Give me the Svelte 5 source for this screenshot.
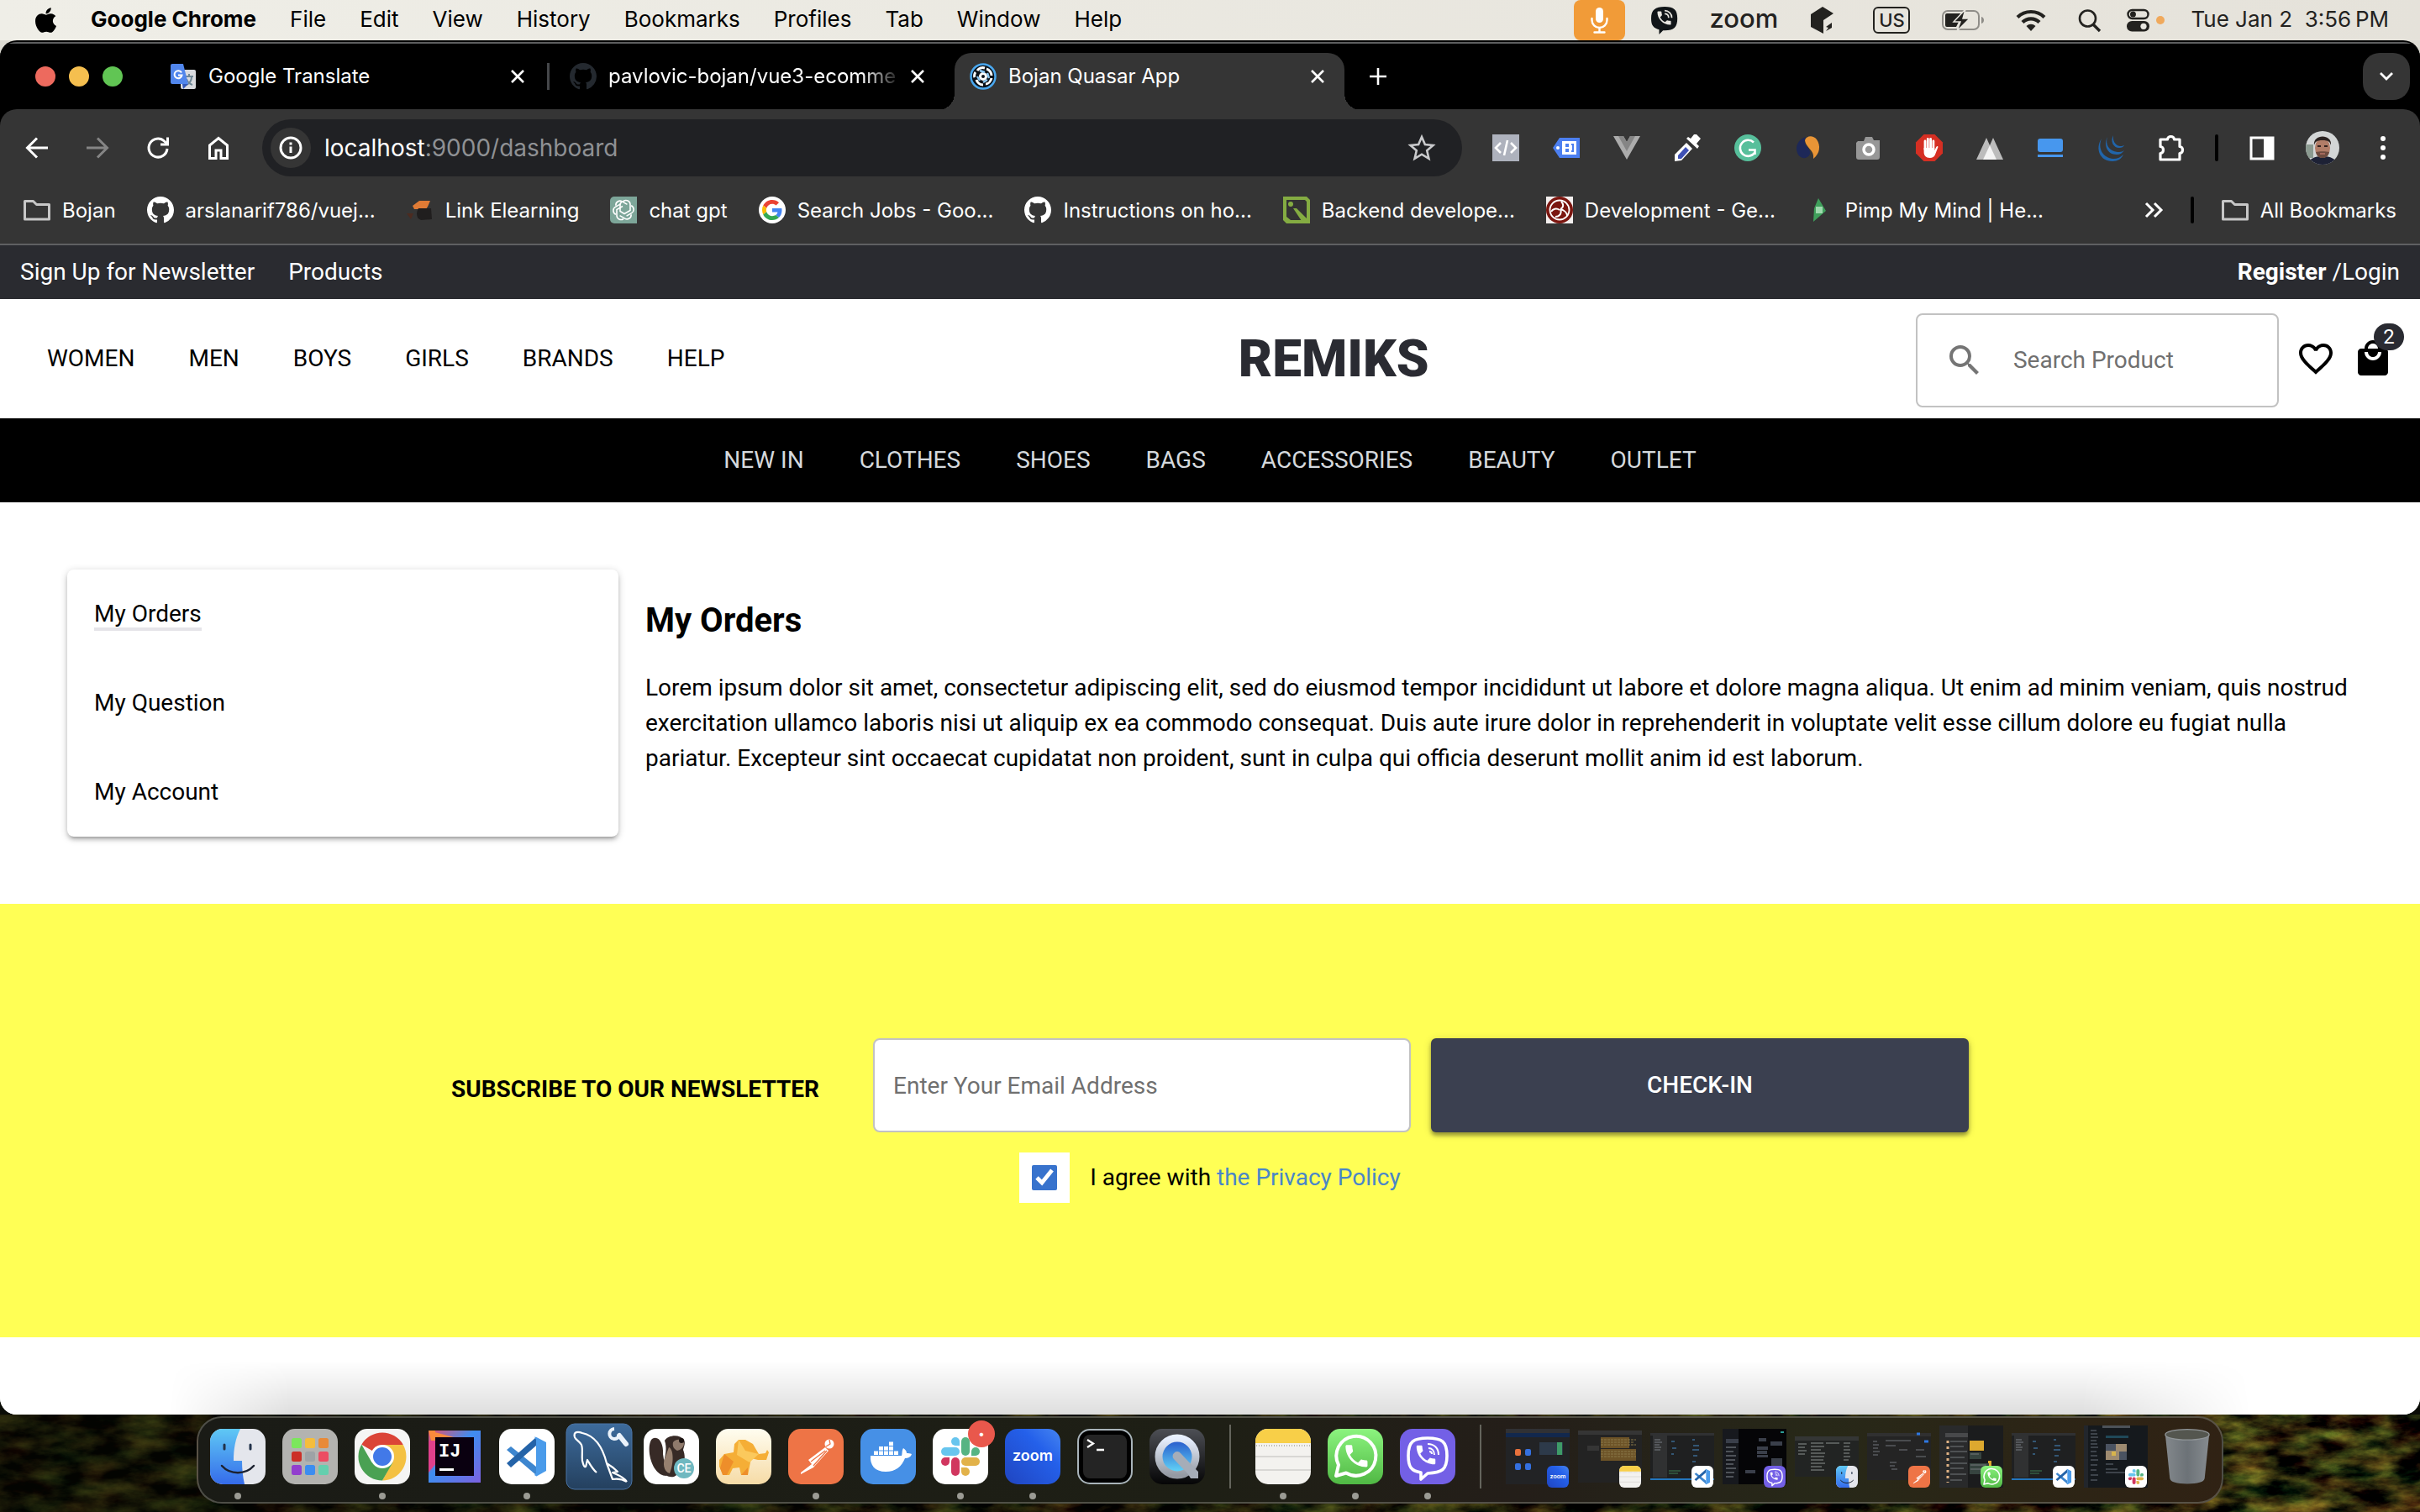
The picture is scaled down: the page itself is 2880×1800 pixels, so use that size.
<script>
  const menus = ['File', 'Edit', 'View', 'History', 'Bookmarks', 'Profiles', 'Tab', 'Window', 'Help'];
  const tabs = [
    { title: 'Google Translate', icon: 'translate' },
    { title: 'pavlovic-bojan/vue3-ecomme', icon: 'githubDark' },
    { title: 'Bojan Quasar App', icon: 'quasar', active: true }
  ];
  const extensions = ['code', 'tag', 'vue', 'pipette', 'grammarly', 'swirl', 'camera', 'adblock', 'peaks', 'laptop', 'jquery', 'puzzle'];
  const bookmarks = [
    { title: 'Bojan', icon: 'folder' },
    { title: 'arslanarif786/vuej...', icon: 'github' },
    { title: 'Link Elearning', icon: 'link' },
    { title: 'chat gpt', icon: 'gpt' },
    { title: 'Search Jobs - Goo...', icon: 'google' },
    { title: 'Instructions on ho...', icon: 'github' },
    { title: 'Backend develope...', icon: 'backend' },
    { title: 'Development - Ge...', icon: 'gecko' },
    { title: 'Pimp My Mind | He...', icon: 'gem' }
  ];
  const primary = ['WOMEN', 'MEN', 'BOYS', 'GIRLS', 'BRANDS', 'HELP'];
  const secondary = ['NEW IN', 'CLOTHES', 'SHOES', 'BAGS', 'ACCESSORIES', 'BEAUTY', 'OUTLET'];
  const account = ['My Orders', 'My Question', 'My Account'];
  const apps = [
    { name: 'finder', open: true }, { name: 'launchpad' }, { name: 'chrome', open: true },
    { name: 'idea' }, { name: 'vscode', open: true }, { name: 'mysql' }, { name: 'dbeaver' },
    { name: 'sequel' }, { name: 'postman', open: true }, { name: 'docker' },
    { name: 'slack', open: true, badge: true }, { name: 'zoom', open: true }, { name: 'terminal' }, { name: 'quicktime' }
  ];
  const recents = [{ name: 'notes', open: true }, { name: 'whatsapp', open: true }, { name: 'viber', open: true }];
  const minimized = [
    { app: 'zoom', view: 'meeting' }, { app: 'notes', view: 'notes' }, { app: 'vscode', view: 'editor' },
    { app: 'viber', view: 'chat' }, { app: 'finder', view: 'files' }, { app: 'postman', view: 'api' },
    { app: 'whatsapp', view: 'messages' }, { app: 'vscode', view: 'editor' }, { app: 'slack', view: 'team' }
  ];
  let agreed = $state(true);
  let search = $state('');
  let email = $state('');
</script>

{#snippet icon(name)}
  {#if name === 'translate'}
    <svg viewBox="0 0 32 32"><rect x="13" y="8" width="18" height="23" rx="2" fill="#d9dbdf"/><path d="M18 16h10M23 13v3M20 26c4-2 6-6 6-10M20 19c1 3 4 6 7 7" stroke="#6f8796" stroke-width="2" fill="none"/><path d="M3 1h13l6 24H3a2 2 0 0 1-2-2V3a2 2 0 0 1 2-2z" fill="#5186ec"/><path d="M16 31l-1-6h7z" fill="#3358b8"/><path d="M14 11.500a4.500 4.500 0 1 0 .5 3H10" stroke="#fff" stroke-width="2" fill="none"/></svg>
  {:else if name === 'github' || name === 'githubDark'}
    <svg viewBox="0 0 16 16" fill={name === 'github' ? '#fff' : '#24292f'}><path d="M8 0C3.58 0 0 3.58 0 8c0 3.54 2.29 6.53 5.47 7.59.4.07.55-.17.55-.38 0-.19-.01-.82-.01-1.49-2.01.37-2.53-.49-2.69-.94-.09-.23-.48-.94-.82-1.13-.28-.15-.68-.52-.01-.53.63-.01 1.08.58 1.23.82.72 1.21 1.87.87 2.33.66.07-.52.28-.87.51-1.07-1.78-.2-3.64-.89-3.64-3.95 0-.87.31-1.59.82-2.15-.08-.2-.36-1.02.08-2.12 0 0 .67-.21 2.2.82.64-.18 1.32-.27 2-.27.68 0 1.36.09 2 .27 1.53-1.04 2.2-.82 2.2-.82.44 1.1.16 1.92.08 2.12.51.56.82 1.27.82 2.15 0 3.07-1.87 3.75-3.65 3.95.29.25.54.73.54 1.48 0 1.07-.01 1.93-.01 2.2 0 .21.15.46.55.38A8.013 8.013 0 0016 8c0-4.42-3.58-8-8-8z"/></svg>
  {:else if name === 'quasar'}
    <svg viewBox="0 0 32 32"><circle cx="16" cy="16" r="14.500" fill="#0b1118" stroke="#4aa7ee" stroke-width="2.500"/><g fill="none" stroke="#fff" stroke-width="3"><circle cx="16" cy="16" r="3.500"/><path d="M9 9c2-3 6-4 9-3M20 7c4 1 6 5 6 8M26 18c-1 4-4 7-7 7M16 26c-4 0-7-3-8-6M6 17c-1-2 0-5 1-6"/></g><path d="M12 9l6 2M21 12l2 6M21 20l-5 3M12 21l-3-5" stroke="#8cc9f5" stroke-width="2.400"/></svg>
  {:else if name === 'close'}
    <svg viewBox="0 0 16 16" fill="none" stroke="#fff" stroke-width="2.600"><path d="M1 1l14 14M15 1L1 15"/></svg>
  {:else if name === 'plus'}
    <svg viewBox="0 0 20 20" fill="none" stroke="#fff" stroke-width="2.600"><path d="M10 0v20M0 10h20"/></svg>
  {:else if name === 'chevron'}
    <svg viewBox="0 0 20 20" fill="none" stroke="#fff" stroke-width="2.800"><path d="M3 6l7 7 7-7"/></svg>
  {:else if name === 'back'}
    <svg viewBox="0 0 32 32" fill="none" stroke="#fff" stroke-width="3"><path d="M29 16H5M16 4.500L4.500 16 16 27.500"/></svg>
  {:else if name === 'forward'}
    <svg viewBox="0 0 32 32" fill="none" stroke="#858585" stroke-width="3"><path d="M3 16h24M16 4.500L27.500 16 16 27.500"/></svg>
  {:else if name === 'reload'}
    <svg viewBox="0 0 32 32" fill="none" stroke="#fff" stroke-width="3"><path d="M27 17a11 11 0 1 1-3.500-9L27 11.500"/><path d="M27.500 3.500V12H19"/></svg>
  {:else if name === 'home'}
    <svg viewBox="0 0 32 32" fill="none" stroke="#fff" stroke-width="3"><path d="M5.500 28.500V13L16 4.500 26.500 13v15.500h-7.500V19h-6v9.500z"/></svg>
  {:else if name === 'info'}
    <svg viewBox="0 0 32 32" fill="none" stroke="#fff"><circle cx="16" cy="16" r="12" stroke-width="3"/><path d="M16 14.500V22M16 9.500v3" stroke-width="3"/></svg>
  {:else if name === 'star'}
    <svg viewBox="0 0 32 32" fill="none" stroke="#c9cacc" stroke-width="2.600"><path d="M16 3l3.900 9 9.600.9-7.300 6.400 2.200 9.500L16 23.700l-8.400 5.100 2.200-9.500L2.500 12.900l9.600-.9z"/></svg>
  {:else if name === 'code'}
    <svg viewBox="0 0 32 32"><path fill="#aeb2bd" d="M0 0h32v32H0z"/><path d="M10 10l-6 6 6 6M22 10l6 6-6 6M18 7l-4 18" stroke="#fff" stroke-width="2.600" fill="none"/></svg>
  {:else if name === 'tag'}
    <svg viewBox="0 0 32 32"><path d="M0 16L8 4h24v24H8z" fill="#4c7ff0"/><circle cx="6" cy="16" r="2" fill="#fff"/><path d="M11 8h17v16H11z" fill="#fff"/><path d="M15 11h4v4h-4zM15 17h4v4h-4zM22 11h3v10h-3v-2h1v-6h-1z" fill="#4c7ff0"/></svg>
  {:else if name === 'vue'}
    <svg viewBox="0 0 32 32"><path d="M0 2h12l4 7 4-7h12L16 30z" fill="#acacac"/><path d="M6 2h6l4 7 4-7h6L16 20z" fill="#858585"/></svg>
  {:else if name === 'pipette'}
    <svg viewBox="0 0 32 32"><path d="M15 10l7 7L9 31l-8 1 0-8z" fill="#fff"/><path d="M14 15l4 4-9 10H5v-4z" fill="#3e50b5"/><path d="M15 5l13 12 2-3-3-3 5-6-5-5h-3l-4 5-3-2z" fill="#fff"/></svg>
  {:else if name === 'grammarly'}
    <svg viewBox="0 0 32 32"><circle cx="16" cy="16" r="16" fill="#57bf9b"/><path d="M23 9.500A9.500 9.500 0 1 0 24 22M17 18.500h7.500V24" fill="none" stroke="#fff" stroke-width="2.600"/></svg>
  {:else if name === 'swirl'}
    <svg viewBox="0 0 32 32"><path d="M13 3C4 6 0 14 3 22c3 8 13 8 15 1 1-6-5-8-6-13-.5-3 0-5 1-7z" fill="#1d2858"/><path d="M12 7c2-6 10-6 14-1 5 7 4 17-4 23 2-10-9-13-10-22z" fill="#e99536"/></svg>
  {:else if name === 'camera'}
    <svg viewBox="0 0 32 32"><path d="M3 8h7l2-5h8l2 4h7v20a3 3 0 0 1-3 3H4a3 3 0 0 1-3-3V10z" fill="#979797"/><circle cx="16" cy="18" r="6" fill="#999" stroke="#fff" stroke-width="3.500"/></svg>
  {:else if name === 'adblock'}
    <svg viewBox="0 0 32 32"><path d="M9.500 0h13L32 9.500v13L22.500 32h-13L0 22.500v-13z" fill="#d52f23"/><path d="M11 18V8M14.300 16V5.500M17.600 16V5.500M20.900 17V8" stroke="#fff" stroke-width="2.800" stroke-linecap="round"/><path d="M9.600 16h12.700v3l2-4c1-1.500 2.500-1 2 .5l-3.500 9c-1 2-3 3.500-6 3.500-5 0-7.200-3-7.200-7z" fill="#fff"/></svg>
  {:else if name === 'peaks'}
    <svg viewBox="0 0 32 32"><path d="M0 30L12 4l4 9 4-9 12 26z" fill="#bcbcbc"/><path d="M8 30l8-17 8 17z" fill="#f4f4f4"/></svg>
  {:else if name === 'laptop'}
    <svg viewBox="0 0 32 32" fill="#4797ee"><rect x="1" y="5" width="30" height="16" rx="3"/><path d="M1 24h30v3H1z"/></svg>
  {:else if name === 'jquery'}
    <svg viewBox="0 0 32 32" fill="#2165aa"><path d="M5 5c-8 12-2 27 13 27 6 0 11-3 13-8-3 3-7 5-12 5C7 28 0 17 5 5z"/><path d="M12 3c-5 10 0 21 11 21 4 0 7-2 9-5-3 2-5 2-8 2-10-1-15-9-12-18z"/><path d="M19 1c-4 7 0 15 7 15 3 0 5-1 6-3-2 1-4 1-5 1-6-1-9-7-8-13z"/></svg>
  {:else if name === 'puzzle'}
    <svg viewBox="0 0 32 32" fill="none" stroke="#fff" stroke-width="3.200" stroke-linejoin="round"><path d="M3 6h8.500a4 3.500 0 0 1 8 0H26v8.500a3.500 4 0 0 1 0 8V30H3v-7.500a3.500 4 0 0 0 0-8z"/></svg>
  {:else if name === 'panel'}
    <svg viewBox="0 0 32 32"><rect x="3" y="4" width="26" height="25" fill="none" stroke="#fff" stroke-width="3"/><path d="M18 3h12v27H18z" fill="#fff"/></svg>
  {:else if name === 'dots'}
    <svg viewBox="0 0 32 32" fill="#fff"><circle cx="16" cy="5" r="3"/><circle cx="16" cy="16" r="3"/><circle cx="16" cy="27" r="3"/></svg>
  {:else if name === 'avatar'}
    <svg viewBox="0 0 40 40"><g clip-path="url(#round40)"><path fill="#d3d6d6" d="M0 0h40v40H0z"/><path fill="#8b9a90" d="M0 16h9v16H0z"/><path d="M3 40c0-7 8-10 17-10s17 3 17 10z" fill="#1d2135"/><ellipse cx="20" cy="20" rx="9" ry="12" fill="#b27d68"/><path d="M10 17C8 3 32 3 30 17c-1-4-3-6-10-6s-9 2-10 6z" fill="#2b2220"/><path d="M12 25c4-1 12-1 16 0-1 5-4 7-8 7s-7-2-8-7z" fill="#6e4b3f"/><path d="M17 27h6" stroke="#a4685c" stroke-width="2"/><path d="M14 18h4M22 18h4" stroke="#33221e" stroke-width="2"/></g></svg>
  {:else if name === 'folder'}
    <svg viewBox="0 0 32 32" fill="none" stroke="#c7c7c7" stroke-width="3" stroke-linejoin="round"><path d="M1.500 5.500h10l4 4h15v17.500h-29z"/></svg>
  {:else if name === 'link'}
    <svg viewBox="0 0 32 32"><path d="M7 11l8-6h13l-3 7-2 3H9z" fill="#e07b35"/><path d="M14 14h15l1 13-13 1c-6-2-6-9-3-14z" fill="#201e1e"/><path d="M0 20h8l-3 7z" fill="#4c2b20"/></svg>
  {:else if name === 'gpt'}
    <svg viewBox="0 0 32 32"><path d="M5 0h27v32H5a5 5 0 0 1-5-5V5a5 5 0 0 1 5-5z" fill="#7da699"/><g fill="none" stroke="#fff" stroke-width="1.600"><path d="M16 5.500a5 5 0 0 1 8 4v7l-7 4-5-3V9a5 5 0 0 1 4-3.500z"/><path d="M16 5.500a5 5 0 0 1 8 4v7" transform="rotate(60 16 16)"/><path d="M16 5.500a5 5 0 0 1 8 4v7" transform="rotate(120 16 16)"/><path d="M16 5.500a5 5 0 0 1 8 4v7l-7 4" transform="rotate(180 16 16)"/><path d="M16 5.500a5 5 0 0 1 8 4v7" transform="rotate(240 16 16)"/><path d="M16 5.500a5 5 0 0 1 8 4v7" transform="rotate(300 16 16)"/></g></svg>
  {:else if name === 'google'}
    <svg viewBox="-8 -8 64 64"><circle cx="24" cy="24" r="32" fill="#fff"/><path fill="#EA4335" d="M24 9.500c3.540 0 6.710 1.220 9.210 3.600l6.850-6.850C35.900 2.380 30.470 0 24 0 14.620 0 6.510 5.380 2.560 13.220l7.980 6.190C12.430 13.720 17.740 9.500 24 9.500z"/><path fill="#4285F4" d="M46.980 24.550c0-1.570-.15-3.090-.38-4.550H24v9.020h12.940c-.58 2.960-2.260 5.480-4.780 7.180l7.730 6c4.510-4.180 7.090-10.360 7.090-17.650z"/><path fill="#FBBC05" d="M10.530 28.590c-.48-1.450-.76-2.990-.76-4.590s.27-3.140.76-4.590l-7.980-6.190C.92 16.460 0 20.120 0 24c0 3.880.92 7.540 2.560 10.780l7.970-6.190z"/><path fill="#34A853" d="M24 48c6.480 0 11.930-2.130 15.890-5.810l-7.730-6c-2.150 1.450-4.920 2.300-8.160 2.300-6.260 0-11.570-4.220-13.470-9.910l-7.980 6.190C6.510 42.620 14.620 48 24 48z"/></svg>
  {:else if name === 'backend'}
    <svg viewBox="0 0 32 32"><path d="M0 0h28l4 4v28H4l-4-4z" fill="#84ac42"/><path d="M4 4h22l2 2v22H9l-5-4z" fill="#333"/><circle cx="9" cy="9" r="3" fill="#84ac42"/><path d="M12 14h4l12 12v6h-4z" fill="#84ac42"/></svg>
  {:else if name === 'gecko'}
    <svg viewBox="0 0 32 32"><path fill="#f3efee" d="M0 0h32v32H0z"/><circle cx="16" cy="16" r="16" fill="#7b1610"/><circle cx="16" cy="16" r="11.500" fill="none" stroke="#fff" stroke-width="1.800"/><path d="M17 15c4-2 4-6 1-9M17 15c2 5-1 9-6 9M16 16c-4-3-8-1-10 2M17 15c4 1 8 4 8 8" fill="none" stroke="#fff" stroke-width="2"/></svg>
  {:else if name === 'gem'}
    <svg viewBox="0 0 32 32"><path d="M14 2l9 15-15 13 1-16z" fill="#3f9f5b"/><path d="M11 12h8v8h-8z" fill="#9fd9ae"/></svg>
  {:else if name === 'magnify'}
    <svg viewBox="0 0 24 24" fill="#757575"><path d="M15.500 14h-.79l-.28-.27A6.471 6.471 0 0 0 16 9.500 6.500 6.500 0 1 0 9.500 16c1.610 0 3.090-.59 4.230-1.570l.27.28v.79l5 4.990L20.490 19l-4.990-5zm-6 0C7.010 14 5 11.990 5 9.500S7.010 5 9.500 5 14 7.010 14 9.500 11.990 14 9.500 14z"/></svg>
  {:else if name === 'heart'}
    <svg viewBox="0 0 24 24"><path d="M16.500 3c-1.740 0-3.410.81-4.500 2.090C10.910 3.810 9.240 3 7.500 3 4.420 3 2 5.420 2 8.500c0 3.780 3.400 6.860 8.550 11.540L12 21.350l1.450-1.320C18.600 15.360 22 12.280 22 8.500 22 5.420 19.580 3 16.500 3zm-4.400 15.550l-.1.100-.1-.1C7.140 14.240 4 11.390 4 8.500 4 6.500 5.500 5 7.500 5c1.540 0 3.040.99 3.570 2.360h1.870C13.460 5.990 14.960 5 16.500 5c2 0 3.500 1.500 3.500 3.500 0 2.890-3.140 5.740-7.900 10.050z"/></svg>
  {:else if name === 'bag'}
    <svg viewBox="0 0 24 24"><path d="M19 6h-2c0-2.760-2.240-5-5-5S7 3.240 7 6H5c-1.100 0-1.990.9-1.990 2L3 20c0 1.100.9 2 2 2h14c1.100 0 2-.9 2-2V8c0-1.100-.9-2-2-2zm-7-3c1.660 0 3 1.340 3 3H9c0-1.660 1.340-3 3-3zm0 10c-2.760 0-5-2.240-5-5h2c0 1.660 1.340 3 3 3s3-1.340 3-3h2c0 2.760-2.240 5-5 5z"/></svg>
  {/if}
{/snippet}

{#snippet app(name)}
  {#if name === 'finder'}
    <svg viewBox="0 0 66 66"><rect width="66" height="66" rx="15" fill="#e4e6ec"/><path d="M15 0h21c-6 12-8 24-8 38h10c0 10 1 19 3 28H15A15 15 0 0 1 0 51V15A15 15 0 0 1 15 0z" fill="url(#finderBlue)"/><path d="M17 19v5M48 19v5" stroke="#22324a" stroke-width="3" stroke-linecap="round"/><path d="M14 44c10 11 28 11 38 0" fill="none" stroke="#1c2230" stroke-width="2.500" stroke-linecap="round"/></svg>
  {:else if name === 'launchpad'}
    <svg viewBox="0 0 66 66"><rect width="66" height="66" rx="15" fill="#b3b3b0"/><rect x="11" y="11" width="12" height="12" rx="2.500" fill="#7ce75c"/><rect x="27" y="11" width="12" height="12" rx="2.500" fill="#f5bd3c"/><rect x="43" y="11" width="12" height="12" rx="2.500" fill="#e88a38"/><rect x="11" y="27" width="12" height="12" rx="2.500" fill="#cc2f27"/><rect x="27" y="27" width="12" height="12" rx="2.500" fill="#9ea3a6"/><rect x="43" y="27" width="12" height="12" rx="2.500" fill="#ec4d62"/><rect x="11" y="43" width="12" height="12" rx="2.500" fill="#923fce"/><rect x="27" y="43" width="12" height="12" rx="2.500" fill="#3c8df0"/><rect x="43" y="43" width="12" height="12" rx="2.500" fill="#64cfae"/></svg>
  {:else if name === 'chrome'}
    <svg viewBox="0 0 66 66"><rect width="66" height="66" rx="15" fill="#f5f5f4"/><path d="M33 33L8.300 18.700A28.500 28.500 0 0 1 57.700 18.700z" fill="#db4437"/><path d="M33 19h24.800A28.500 28.500 0 0 1 33 61.500L45 40z" fill="#f4c142"/><path d="M8.300 18.700A28.500 28.500 0 0 0 33 61.500L45.500 40 20.500 40z" fill="#4aa153"/><circle cx="33" cy="33" r="14" fill="#fff"/><circle cx="33" cy="33" r="11" fill="#4279e8"/></svg>
  {:else if name === 'idea'}
    <svg viewBox="0 0 66 66"><path d="M2 2h62v62H2z" fill="url(#ideaEdge)"/><path d="M2 2l30 8-22 24zM2 2h8v14z" fill="#f98a3c"/><path d="M2 14l10 0v26L2 52z" fill="#e0408c"/><path d="M10 10h46v46H10z" fill="#0a0010"/><path d="M15 48.500h17" stroke="#fff" stroke-width="3"/><text x="14" y="33" font-family="Liberation Mono, monospace" font-weight="700" font-size="22" fill="#fff">IJ</text></svg>
  {:else if name === 'vscode'}
    <svg viewBox="0 0 66 66"><rect width="66" height="66" rx="15" fill="#fff"/><path d="M9 25l5-4 30 24v10z" fill="#3d86cf"/><path d="M9 41l5 5 30-26V10z" fill="#2463a8"/><path d="M42 9.500l2.500.5L56 16v34l-11.500 6.500L42 55l2-2.500V13z" fill="#4a9bea"/></svg>
  {:else if name === 'mysql'}
    <svg viewBox="0 0 80 80"><rect x="1" y="1" width="78" height="78" rx="10" fill="url(#mysqlBlue)" stroke="#4a74a6"/><path d="M11 17c-2-7 4-7 9-5 14 3 24 16 29 36 5 3 9 6 13 10l-6 1c6 3 13 5 17 11M11 17c1 3 5 4 8 9 2 6 0 11 1 19 1 4 2 8 4 7 1-2 1-5 2-8 3 5 6 11 11 15M49 48l7 19c6-1 12 0 17 3" fill="none" stroke="#fff" stroke-width="2.200" stroke-linejoin="round"/><path d="M64 15l8 10" stroke="#eaf2fb" stroke-width="6" stroke-linecap="round"/><path d="M58 7a6 6 0 1 0 6 8" stroke="#eaf2fb" stroke-width="4" fill="none"/></svg>
  {:else if name === 'dbeaver'}
    <svg viewBox="0 0 66 66"><rect width="66" height="66" rx="15" fill="#fff"/><path d="M10 12c8-5 14 6 13 18l4 26c-10 0-18-12-20-26-1-8 0-15 3-18z" fill="#372a26"/><path d="M25 14c4-7 18-8 23-1 2 4 0 8-1 12 5 12-1 27-11 32-12 2-15-8-12-18 2-8 4-16 1-25z" fill="#372a26"/><path d="M30 22c6 2 6 20 1 31-7-2-9-12-5-20z" fill="#97806f"/><path d="M35 16c4-5 11-4 13 1 0 5-4 8-8 9-4-2-6-5-5-10z" fill="#8f7a6c"/><circle cx="45" cy="14" r="3" fill="#1c1412"/><circle cx="48" cy="47" r="12" fill="#6fb8c0"/><text x="48" y="52" text-anchor="middle" font-family="Roboto, sans-serif" font-weight="500" font-size="14" fill="#fff">CE</text></svg>
  {:else if name === 'sequel'}
    <svg viewBox="0 0 66 66"><rect width="66" height="66" rx="15" fill="url(#cream)"/><path d="M22 18l5-5 8 0 9 5 7 12 8-1 2-4 2 3-3 9-10 0-8-2-4 20h-8l-2-9-8 1-4 8H9L4 45v-8l6-7 11-2z" fill="#f5ae36"/><path d="M27 13l8 13 16 4-11 10-15-9z" fill="#fbc95c"/><path d="M10 30l11 9-8 16H8l-3-8zM38 46l-8 9h8z" fill="#ee8e2a"/></svg>
  {:else if name === 'postman'}
    <svg viewBox="0 0 66 66"><rect width="66" height="66" rx="15" fill="#ee7446"/><circle cx="49" cy="18" r="5.500" fill="#fff"/><path d="M44 22l4 4-18 20-15 8 0-2 13-10-4-5z" fill="#fff"/><path d="M27 39l17-13M30 44l16-18M49 13l1 5-5 3" stroke="#ee7446" stroke-width="1.300" fill="none"/></svg>
  {:else if name === 'docker'}
    <svg viewBox="0 0 66 66"><rect width="66" height="66" rx="15" fill="#4690e6"/><path d="M12 32h37c1-2 0-6 2-9 3 2 4 4 4 6 2 0 4 0 6 1-1 4-5 5-8 5-4 10-11 16-23 16-13 0-19-8-18-19z" fill="#fff"/><path d="M16 26.500h5v4.500h-5zM22 26.500h5v4.500h-5zM28 26.500h5v4.500h-5zM34 26.500h5v4.500h-5zM40 26.500h5v4.500h-5zM22 21h5v4.500h-5zM28 21h5v4.500h-5zM34 21h5v4.500h-5zM34 15.500h5v4.500h-5z" fill="#fff"/></svg>
  {:else if name === 'slack'}
    <svg viewBox="0 0 66 66"><rect width="66" height="66" rx="15" fill="#fff"/><g fill="#67c5ee"><rect x="10" y="22" width="22" height="10" rx="5"/><path d="M22 15a5 5 0 0 1 10 0v5h-5a5 5 0 0 1-5-5z"/></g><g fill="#56b483"><rect x="34" y="10" width="10" height="22" rx="5"/><path d="M46 32v-5a5 5 0 1 1 5 5z"/></g><g fill="#e2b24a"><rect x="34" y="34" width="22" height="10" rx="5"/><path d="M34 46h5a5 5 0 1 1-5 5z"/></g><g fill="#d1365f"><rect x="22" y="34" width="10" height="22" rx="5"/><path d="M20 34v5a5 5 0 1 1-5-5z"/></g></svg>
  {:else if name === 'zoom'}
    <svg viewBox="0 0 66 66"><rect width="66" height="66" rx="15" fill="url(#zoomBlue)"/><text x="33" y="38" text-anchor="middle" font-family="Inter, sans-serif" font-weight="600" font-size="18" fill="#fff">zoom</text></svg>
  {:else if name === 'terminal'}
    <svg viewBox="0 0 66 66"><rect width="66" height="66" rx="15" fill="#a9b4ba"/><rect x="2" y="2" width="62" height="62" rx="13" fill="#000"/><rect x="7" y="7" width="52" height="52" rx="8" fill="#242424"/><path d="M12 13l7 4.500-7 4.500M23 25h9" fill="none" stroke="#fff" stroke-width="2.300"/></svg>
  {:else if name === 'quicktime'}
    <svg viewBox="0 0 66 66"><rect width="66" height="66" rx="15" fill="url(#qtBack)"/><circle cx="33" cy="33" r="22" fill="url(#qtBlue)" stroke="url(#qtRing)" stroke-width="9"/><path d="M29 29a5 5 0 0 1 8 0l16 17 5 5v8h-9l-3-5-17-18a5 5 0 0 1 0-7z" fill="#a6adb8"/></svg>
  {:else if name === 'notes'}
    <svg viewBox="0 0 66 66"><rect width="66" height="66" rx="15" fill="#f3f2ef"/><path d="M0 17v-2A15 15 0 0 1 15 0h36a15 15 0 0 1 15 15v2z" fill="#f8cf48"/><path d="M1 20h64" stroke="#b9b8b3" stroke-dasharray="1 2" stroke-width="2"/><path d="M0 33h66M0 49h66" stroke="#cfcecb" stroke-width="1.500"/></svg>
  {:else if name === 'whatsapp'}
    <svg viewBox="0 0 66 66"><rect width="66" height="66" rx="15" fill="url(#waGreen)"/><path d="M10 56l3-13a23.500 23.500 0 1 1 9 9.500z" fill="none" stroke="#fff" stroke-width="4" stroke-linejoin="round"/><path transform="translate(17 15) scale(1.450)" fill="#fff" d="M6.620 10.790c1.440 2.830 3.760 5.140 6.590 6.590l2.200-2.200c.27-.27.67-.36 1.020-.24 1.120.37 2.330.57 3.570.57.55 0 1 .45 1 1V20c0 .55-.45 1-1 1-9.390 0-17-7.610-17-17 0-.55.45-1 1-1h3.500c.55 0 1 .45 1 1 0 1.250.2 2.450.57 3.570.11.35.03.74-.25 1.020z"/></svg>
  {:else if name === 'viber'}
    <svg viewBox="0 0 66 66"><rect width="66" height="66" rx="15" fill="#7360e6"/><path d="M33 11c17 0 23 4 23 21s-6 20-23 21l-8 7v-8c-12-2-15-7-15-20 0-17 6-21 23-21z" fill="none" stroke="#fff" stroke-width="3.600" stroke-linejoin="round"/><path transform="translate(16 16) scale(1.250)" fill="#fff" d="M6.620 10.790c1.440 2.830 3.760 5.140 6.590 6.590l2.200-2.200c.27-.27.67-.36 1.020-.24 1.120.37 2.330.57 3.570.57.55 0 1 .45 1 1V20c0 .55-.45 1-1 1-9.390 0-17-7.610-17-17 0-.55.45-1 1-1h3.500c.55 0 1 .45 1 1 0 1.250.2 2.450.57 3.570.11.35.03.74-.25 1.020z"/><path d="M33 18c8 0 13 5 13 13M34 23c4 0 7 3 7 8M35 27c2 0 3 1 3 3" fill="none" stroke="#fff" stroke-width="2"/></svg>
  {/if}
{/snippet}

{#snippet preview(view)}
  {#if view === 'meeting'}
    <svg viewBox="0 0 76 66"><path fill="#222325" d="M0 0h76v66H0z"/><path fill="#303134" d="M0 0h76v5H0z"/><path fill="#12284d" d="M0 5h76v5H0z"/><path fill="#2d3a4a" d="M40 16h28v15H40z"/><path fill="#3e9b68" d="M61 16h6v15h-6z"/><rect x="11" y="24" width="7" height="8" rx="2" fill="#e8713c"/><rect x="23" y="24" width="7" height="8" rx="2" fill="#3470e0"/><rect x="11" y="41" width="7" height="8" rx="2" fill="#3470e0"/><rect x="23" y="41" width="7" height="8" rx="2" fill="#3470e0"/></svg>
  {:else if view === 'notes'}
    <svg viewBox="0 0 76 62"><path fill="#232323" d="M0 0h76v62H0z"/><path fill="#353535" d="M0 0h76v5H0zM11 18h14v6H11z"/><path fill="#6d5327" d="M27 8h34v13H27zM27 22h42v14H27z"/><path d="M27 11h42M27 14h40M27 17h42M27 25h42M27 28h41M27 31h42" stroke="#8b7a4b" stroke-dasharray="3 1"/></svg>
  {:else if view === 'editor'}
    <svg viewBox="0 0 76 56"><path fill="#1f2021" d="M0 0h76v56H0z"/><path fill="#303132" d="M0 0h76v3H0zM3 3h17v50H3z"/><path d="M5 8h7M5 11h9M5 14h6M5 17h8M5 20h7" stroke="#787e84"/><path d="M25 10h4M26 18h5M25 25h3M50 8h3M51 15h7M50 20h8M51 27h5M50 34h4" stroke="#3b6890" stroke-width="1.500"/><path d="M22 45h14M22 48h11" stroke="#3f7f54"/><path fill="#2476bd" d="M0 54h76v2H0z"/></svg>
  {:else if view === 'chat'}
    <svg viewBox="0 0 76 66"><path fill="#050507" d="M0 0h76v66H0z"/><path fill="#17191e" d="M0 0h19v66H0z"/><path fill="#3a3f4a" d="M4 12h15v5H4zM43 11h9v4h-9zM57 15h14v5H57zM41 21h13v4H41zM41 26h12v4H41zM41 31h13v3H41zM58 35h13v9H58zM27 49h12v4H27z"/><path d="M4 22h12M4 27h9M4 32h12M4 37h11M4 42h9M4 47h12M4 52h10M4 57h9" stroke="#878d94"/><path fill="#2c9d95" d="M69 3h4v2h-4z"/></svg>
  {:else if view === 'files'}
    <svg viewBox="0 0 76 48"><path fill="#222423" d="M0 0h76v48H0z"/><path fill="#343635" d="M0 0h76v5H0z"/><path d="M4 9h10M4 13h8M4 17h10M4 21h8M19 8h15M19 12h16M19 16h12M19 20h17M19 24h16M19 28h15M19 32h17M19 36h13M19 40h16M37 8h16M58 8h8M58 12h7M58 16h8M58 20h7M58 24h8M58 28h6" stroke="#8b9190"/></svg>
  {:else if view === 'api'}
    <svg viewBox="0 0 76 56"><path fill="#242424" d="M0 0h76v56H0z"/><path fill="#303030" d="M0 0h76v4H0z"/><path d="M7 10h5M7 14h7M7 18h6M7 22h8M7 26h6M22 9h30M22 15h12M38 20h10M58 20h10M58 28h12M27 35h8M27 39h6M29 43h7" stroke="#70757a"/><path d="M68 10h5M59 1h4" stroke="#2f78e2" stroke-width="3"/></svg>
  {:else if view === 'messages'}
    <svg viewBox="0 0 76 74"><path fill="#1b1c1d" d="M0 0h76v74H0z"/><path fill="#292a2b" d="M0 0h34v74H0z"/><path fill="#48494b" d="M7 9h27v5H7z"/><path fill="#dda92f" d="M36 18h17v12H36zM58 42h4v9h-4z"/><path fill="#36443f" d="M36 32h14v8H36zM36 45h23v13H36z"/><path d="M13 19h20M13 25h16M13 31h20M13 38h17M13 45h20M13 51h16M13 58h19M13 65h14M37 34h10M37 47h19M37 52h20" stroke="#75797d"/><path d="M10 18v50" stroke="#dfb184" stroke-width="3" stroke-dasharray="3 4"/></svg>
  {:else}
    <svg viewBox="0 0 76 74"><path fill="#15191d" d="M0 0h76v74H0z"/><path fill="#22262c" d="M0 0h5v74H0z"/><path fill="#4c5258" d="M22 0h33v3H22z"/><path fill="#1f4858" d="M26 12h27v3H26z"/><path fill="#9d8a70" d="M26 22h25v19H26z"/><path fill="#4a5361" d="M26 22h12v8H26zM42 31h9v10h-9z"/><path fill="#d7b44c" d="M33 31h5v5h-5z"/><path d="M8 6h7M8 10h8M8 14h9M8 18h7M8 22h8M8 26h9M8 31h7M8 36h8M8 41h9M8 47h8M8 53h7M8 59h9M8 65h8M26 46h9M26 52h14M26 56h23" stroke="#666e78"/></svg>
  {/if}
{/snippet}

<svg class="defs" aria-hidden="true">
  <defs>
    <clipPath id="round40"><circle cx="20" cy="20" r="20" /></clipPath>
    <linearGradient id="finderBlue" x2="0" y2="1"><stop stop-color="#5fc8f5" /><stop offset="1" stop-color="#356bea" /></linearGradient>
    <linearGradient id="ideaEdge" x2="1" y2="1"><stop stop-color="#e84f6b" /><stop offset=".45" stop-color="#3e8df0" /><stop offset="1" stop-color="#7c61e0" /></linearGradient>
    <linearGradient id="mysqlBlue" x2="0" y2="1"><stop stop-color="#3d6b9c" /><stop offset="1" stop-color="#24405e" /></linearGradient>
    <linearGradient id="cream" x2="0" y2="1"><stop stop-color="#fffdf0" /><stop offset="1" stop-color="#f6dba6" /></linearGradient>
    <linearGradient id="zoomBlue" x1="1" x2="0" y2="1"><stop stop-color="#4685f0" /><stop offset=".35" stop-color="#2460ea" /><stop offset="1" stop-color="#2045c0" /></linearGradient>
    <linearGradient id="qtBack" x2="0" y2="1"><stop stop-color="#4d4f55" /><stop offset="1" stop-color="#050506" /></linearGradient>
    <linearGradient id="qtBlue" x2="0" y2="1"><stop stop-color="#2350c8" /><stop offset="1" stop-color="#68e0fb" /></linearGradient>
    <linearGradient id="qtRing" x2="0" y2="1"><stop stop-color="#e8f0ff" /><stop offset="1" stop-color="#959aa3" /></linearGradient>
    <linearGradient id="waGreen" x2="0" y2="1"><stop stop-color="#8cf47f" /><stop offset="1" stop-color="#50b844" /></linearGradient>
    <linearGradient id="bin" x2="1"><stop stop-color="#83888c" /><stop offset=".5" stop-color="#6c7277" /><stop offset="1" stop-color="#868b8f" /></linearGradient>
  </defs>
</svg>

<div class="desktop">
  <header class="menubar">
    <svg class="apple" viewBox="0 0 384 512" aria-label="Apple menu"><path d="M318.700 268.700c-.2-36.700 16.400-64.400 50-84.800-18.800-26.900-47.200-41.700-84.700-44.600-35.500-2.800-74.300 20.700-88.500 20.700-15 0-49.400-19.700-76.400-19.700C63.300 141.200 4 184.800 4 273.500q0 39.300 14.400 81.200c12.800 36.700 59 126.700 107.200 125.200 25.200-.6 43-17.900 75.800-17.900 31.800 0 48.300 17.900 76.400 17.900 48.600-.7 90.400-82.500 102.600-119.300-65.200-30.700-61.700-90-61.700-91.900zm-56.600-164.200c27.300-32.400 24.800-61.900 24-72.500-24.100 1.400-52 16.400-67.900 34.900-17.500 19.800-27.800 44.300-25.600 71.900 26.100 2 49.900-11.400 69.500-34.300z"/></svg>
    <nav class="menus" aria-label="Menu bar">
      <button class="current">Google Chrome</button>
      {#each menus as menu}<button>{menu}</button>{/each}
    </nav>
    <div class="status">
      <span class="mic"><svg viewBox="0 0 24 34" fill="none" stroke="#fff" stroke-width="2.400" stroke-linecap="round"><rect x="7.500" y="2" width="9" height="18" rx="4.500" fill="#fff" stroke="none"/><path d="M3 15v2a9 9 0 0 0 18 0v-2M12 26v5M6 31.500h12"/></svg></span>
      <svg class="s37" viewBox="0 0 37 36"><path d="M17 1c12 0 16 4 16 15s-4 15-16 15h-2l-5 5v-6C3 28 0 25 0 16 0 5 5 1 17 1z" fill="#111518"/><path transform="translate(5 4) scale(.95)" fill="#e8e6e0" d="M6.620 10.790c1.440 2.830 3.760 5.140 6.590 6.590l2.200-2.200c.27-.27.67-.36 1.020-.24 1.120.37 2.330.57 3.570.57.55 0 1 .45 1 1V20c0 .55-.45 1-1 1-9.390 0-17-7.610-17-17 0-.55.45-1 1-1h3.500c.55 0 1 .45 1 1 0 1.250.2 2.450.57 3.570.11.35.03.74-.25 1.020z"/><path d="M17 6c5 0 9 4 9 9M17 10c3 0 5 2 5 5" fill="none" stroke="#e8e6e0" stroke-width="1.800"/></svg>
      <span class="zoomword">zoom</span>
      <svg class="s50" viewBox="0 0 50 34"><path d="M6 10L20 1l13 8-12 8v16L6 25z" fill="#23221f"/><path d="M24 25l7-5v6l-7 4 3-4z" fill="#23221f"/></svg>
      <span class="lang">US</span>
      <svg class="s64" viewBox="0 0 64 30"><rect x="9" y="4" width="43" height="22" rx="6" fill="none" stroke="#8f8d88" stroke-width="2"/><path d="M55 11c4 1 4 7 0 8z" fill="#8f8d88"/><path d="M14 7h18l-10 10h6l-3 6H14a2 2 0 0 1-2-2V9a2 2 0 0 1 2-2z" fill="#23221f"/><path d="M36 2L22 17h8l-4 11 15-15h-8z" fill="#23221f" stroke="#e7e5de" stroke-width="1.500"/></svg>
      <svg class="s40" viewBox="0 0 40 28" fill="none" stroke="#23221f" stroke-width="4.200"><path d="M4 10.500a23 23 0 0 1 32 0M10 16.500a14 14 0 0 1 20 0"/><path d="M14.500 21a8 8 0 0 1 11 0L20 27z" fill="#23221f" stroke="none"/></svg>
      <svg class="s34" viewBox="0 0 34 28" fill="none" stroke="#23221f" stroke-width="2.600"><circle cx="17.500" cy="12" r="9.500"/><path d="M24 19l8 8" stroke-width="3.400"/></svg>
      <svg class="s46" viewBox="0 0 46 28"><rect x="1.500" y="2" width="24" height="10" rx="5" fill="none" stroke="#23221f" stroke-width="2.400"/><circle cx="7.500" cy="7" r="3.500" fill="#23221f"/><rect y="15" width="27" height="12.500" rx="6.200" fill="#23221f"/><circle cx="20" cy="21.300" r="3.600" fill="#e7e5de"/><circle cx="40" cy="14" r="5" fill="#f0a95c"/></svg>
      <time>Tue Jan 2&nbsp; 3:56&thinsp;PM</time>
    </div>
  </header>

  <div class="window">
    <div class="tabstrip">
      <div class="lights"><i class="red"></i><i class="amber"></i><i class="green"></i></div>
      {#each tabs as tab}
        <div class="tab" class:active={tab.active} class:fade={tab.icon === 'githubDark'}>
          <span class="fav">{@render icon(tab.icon)}</span>
          <span class="tabtitle">{tab.title}</span>
          <button class="x" aria-label="Close tab">{@render icon('close')}</button>
        </div>
      {/each}
      <button class="newtab" aria-label="New tab">{@render icon('plus')}</button>
      <button class="tabsearch" aria-label="Search tabs">{@render icon('chevron')}</button>
    </div>

    <div class="toolbar">
      {#each ['back', 'forward', 'reload', 'home'] as name}<button class="tool" aria-label={name}>{@render icon(name)}</button>{/each}
      <div class="address">
        <span class="site-info">{@render icon('info')}</span>
        <span class="url"><b>localhost</b>:9000/dashboard</span>
        <button class="tool" aria-label="Bookmark this page">{@render icon('star')}</button>
      </div>
      {#each extensions as name}<button class="tool" aria-label={name}>{@render icon(name)}</button>{/each}
      <span class="rule"></span>
      <button class="tool" aria-label="Side panel">{@render icon('panel')}</button>
      <button class="tool avatar" aria-label="Profile">{@render icon('avatar')}</button>
      <button class="tool" aria-label="Menu">{@render icon('dots')}</button>
    </div>

    <nav class="bookmarks" aria-label="Bookmarks">
      {#each bookmarks as mark}
        <a href="#bookmark"><span class="fav">{@render icon(mark.icon)}</span>{mark.title}</a>
      {/each}
      <button class="more" aria-label="More bookmarks"><svg viewBox="0 0 22 22" fill="none" stroke="#fff" stroke-width="3"><path d="M2 3l8 8-8 8M12 3l8 8-8 8"/></svg></button>
      <span class="rule"></span>
      <a href="#all"><span class="fav">{@render icon('folder')}</span>All Bookmarks</a>
    </nav>

    <div class="site">
      <div class="topbar">
        <a href="#newsletter">Sign Up for Newsletter</a>
        <a href="#products">Products</a>
        <span class="auth"><a href="#register"><strong>Register</strong></a> /<a href="#login">Login</a></span>
      </div>
      <div class="masthead">
        <nav class="links" aria-label="Departments">{#each primary as item}<a href="#dept">{item}</a>{/each}</nav>
        <a class="logo" href="#home">REMIKS</a>
        <div class="actions">
          <label class="searchbox"><span class="glass">{@render icon('magnify')}</span><input type="text" placeholder="Search Product" aria-label="Search Product" bind:value={search} /></label>
          <button class="act" aria-label="Wishlist">{@render icon('heart')}</button>
          <button class="act" aria-label="Cart">{@render icon('bag')}<span class="count">2</span></button>
        </div>
      </div>
      <nav class="links categories" aria-label="Categories">{#each secondary as item}<a href="#cat">{item}</a>{/each}</nav>

      <main class="content">
        <nav class="card" aria-label="Account">
          {#each account as item, i}<a href="#account"><span class:selected={i === 0}>{item}</span></a>{/each}
        </nav>
        <article>
          <h1>My Orders</h1>
          <p>Lorem ipsum dolor sit amet, consectetur adipiscing elit, sed do eiusmod tempor incididunt ut labore et dolore magna aliqua. Ut enim ad minim veniam, quis nostrud exercitation ullamco laboris nisi ut aliquip ex ea commodo consequat. Duis aute irure dolor in reprehenderit in voluptate velit esse cillum dolore eu fugiat nulla pariatur. Excepteur sint occaecat cupidatat non proident, sunt in culpa qui officia deserunt mollit anim id est laborum.</p>
        </article>
      </main>

      <form class="newsletter" onsubmit={(e) => e.preventDefault()}>
        <div class="signup">
          <label for="email">SUBSCRIBE TO OUR NEWSLETTER</label>
          <input id="email" type="email" placeholder="Enter Your Email Address" bind:value={email} />
          <button>CHECK-IN</button>
        </div>
        <div class="agree">
          <span class="tickbox"><input id="agree" type="checkbox" bind:checked={agreed} /></span>
          <label for="agree">I agree with <a href="#privacy">the Privacy Policy</a></label>
        </div>
      </form>
      <div class="dockshade"></div>
    </div>
  </div>

  <footer class="shelf">
    <svg class="grass" aria-hidden="true"><filter id="texture" color-interpolation-filters="sRGB"><feTurbulence type="fractalNoise" baseFrequency=".02 .05" numOctaves="5" seed="4" /><feColorMatrix values="1 .3 0 0 -.47  1 0 0 0 -.33  .3 0 0 0 -.1  0 0 0 0 1" /></filter><rect width="100%" height="100%" filter="url(#texture)" /></svg>
    <div class="dock">
      {#each apps as item}
        <div class="app" class:large={item.name === 'mysql'}>{@render app(item.name)}{#if item.badge}<span class="badge">•</span>{/if}{#if item.open}<i class="running"></i>{/if}</div>
      {/each}
      <span class="divider"></span>
      {#each recents as item}
        <div class="app">{@render app(item.name)}<i class="running"></i></div>
      {/each}
      <span class="divider"></span>
      <div class="thumbs">
        {#each minimized as item}
          <div class="thumb">{@render preview(item.view)}<span class="owner">{@render app(item.app)}</span></div>
        {/each}
      </div>
      <svg class="bin" viewBox="0 0 60 74"><path d="M1 8l6 58c1 5 9 7 23 7s22-2 23-7l6-58z" fill="url(#bin)"/><ellipse cx="30" cy="8" rx="29" ry="7" fill="#54564f" stroke="#909598" stroke-width="1.500"/></svg>
    </div>
  </footer>
</div>

<style>
  :global(body) { margin: 0; }
  * { box-sizing: border-box; }
  button { font: inherit; color: inherit; background: none; border: 0; padding: 0; margin: 0; }
  a { color: inherit; text-decoration: none; }
  svg { display: block; width: 100%; height: 100%; overflow: visible; }
  .defs { position: absolute; width: 0; height: 0; }
  .desktop { min-height: 100vh; display: flex; flex-direction: column; font-family: Inter, sans-serif; font-size: 24px; background: linear-gradient(#dcdad2 0 100px, #0a0c06 200px); }

  .menubar { display: flex; align-items: center; height: 48px; padding: 0 37px 0 41px; background: linear-gradient(90deg, #efeee7, #e5e2da); color: #000; font-size: 26px; line-height: 32px; white-space: nowrap; }
  .apple { width: 27px; height: 34px; flex: none; margin-right: 40px; }
  .menus { display: flex; gap: 40px; padding-bottom: 2px; }
  .current { font-weight: 700; }
  .status { margin-left: auto; display: flex; align-items: center; gap: 30px; color: #23221f; }
  .status svg { flex: none; height: 34px; }
  .status time { padding-bottom: 2px; }
  .mic { width: 61px; height: 48px; padding: 7px 18px; background: #f19b38; border-radius: 8px; }
  .s37 { width: 37px; } .s50 { width: 50px; } .s64 { width: 64px; } .s40 { width: 40px; } .s34 { width: 34px; } .s46 { width: 46px; }
  .zoomword { width: 88px; padding-bottom: 4px; text-align: center; font-size: 31px; font-weight: 500; line-height: 40px; }
  .lang { width: 44px; height: 32px; border: 2px solid #23221f; border-radius: 6px; font-size: 22px; line-height: 28px; font-weight: 500; text-align: center; }

  .window { flex: 1; display: flex; flex-direction: column; overflow: hidden; border-top: 2px solid #000; border-radius: 20px; background: #fff; }
  .tabstrip { display: flex; align-items: center; padding: 12px 12px 0 42px; background: #000; border-top: 2px solid #5d5e5f; height: 80px; color: #fff; }
  .lights { display: flex; gap: 16px; margin-right: 38px; padding-bottom: 12px; }
  .lights i { width: 24px; height: 24px; border-radius: 50%; }
  .red { background: #ed6a5e; } .amber { background: #f5bf4f; } .green { background: #61c554; }
  .tab { position: relative; display: flex; align-items: center; width: 464px; height: 68px; padding: 0 24px 12px 18px; margin-right: 12px; }
  .tab .fav { margin-right: 14px; }
  .tab:nth-of-type(2)::after { content: ''; position: absolute; right: -6px; top: 12px; width: 3px; height: 32px; background: #45474a; }
  .tab.active { background: #353535; border-radius: 20px 20px 0 0; }
  .tab.active::before, .tab.active::after { content: ''; position: absolute; bottom: 0; width: 20px; height: 20px; }
  .tab.active::before { left: -20px; background: radial-gradient(circle at 0 0, transparent 20px, #353535 20px); }
  .tab.active::after { right: -20px; background: radial-gradient(circle at 100% 0, transparent 20px, #353535 20px); }
  .fav { width: 32px; height: 32px; flex: none; }
  .tabtitle { flex: 1; white-space: nowrap; line-height: 32px; }
  .fade .tabtitle { mask-image: linear-gradient(90deg, #000 84%, transparent 97%); }
  .x { flex: none; width: 16px; height: 16px; }
  .newtab { width: 20px; height: 20px; margin: 0 0 12px 18px; }
  .tabsearch { width: 56px; height: 56px; margin: 0 0 12px auto; padding: 18px; border-radius: 20px; background: #353535; }

  .toolbar { display: flex; align-items: center; padding: 12px 8px 0; background: #353535; border-radius: 20px 20px 0 0; box-shadow: 0 -20px 0 -1px #000; color: #fff; }
  .tabstrip { position: relative; z-index: 1; }
  .toolbar { box-shadow: none; }
  .window { background: linear-gradient(#000 0 160px, #fff 160px); }
  .tool { flex: none; width: 72px; height: 40px; padding: 4px 20px; }
  .avatar { padding: 0 16px; }
  .address { flex: 1; display: flex; align-items: center; height: 68px; margin: 0 16px; padding-left: 10px; border-radius: 34px; background: #202124; }
  .address .tool { margin-left: auto; margin-right: 12px; }
  .site-info { width: 48px; height: 48px; padding: 8px; border-radius: 50%; background: #353535; }
  .url { margin-left: 16px; font-size: 28px; color: #8f9194; }
  .url b { font-weight: 400; color: #fff; }
  .rule { flex: none; width: 4px; height: 32px; margin: 0 16px; border-radius: 2px; background: #000; }

  .bookmarks { display: flex; align-items: center; height: 82px; padding: 0 28px; gap: 37px; background: #353535; border-bottom: 2px solid #5f6062; color: #fff; white-space: nowrap; }
  .bookmarks a { display: flex; align-items: center; gap: 14px; }
  .bookmarks .rule { margin: 0 -4px; }
  .more { width: 22px; height: 22px; margin-left: auto; }

  .site { flex: 1; display: flex; flex-direction: column; background: #fff; font-family: Roboto, sans-serif; font-size: 28px; line-height: 42px; color: #000; }
  .topbar { display: flex; gap: 40px; padding: 11px 24px; background: #2a2b30; color: #fff; }
  .auth { margin-left: auto; }
  .masthead { display: flex; justify-content: space-between; align-items: center; height: 142px; padding: 0 32px 0 56px; }
  .links { display: flex; gap: 64px; }
  .logo { margin-left: 32px; color: #2a2b32; font-family: 'Liberation Sans Narrow', Roboto, sans-serif; font-size: 62px; font-weight: 900; line-height: 72px; }
  .actions { display: flex; align-items: center; gap: 20px; }
  .searchbox { display: flex; align-items: center; width: 432px; height: 112px; margin-top: 4px; padding: 0 24px 0 32px; border: 2px solid #c2c2c2; border-radius: 8px; }
  .glass { width: 48px; height: 48px; flex: none; margin-right: 34px; }
  input { font: inherit; color: #000; }
  input::placeholder { color: #707070; opacity: 1; }
  .searchbox input { width: 100%; min-width: 0; border: 0; outline: 0; padding: 0; background: none; }
  .act { position: relative; width: 48px; height: 48px; }
  .count { position: absolute; top: -18px; right: -13px; width: 36px; height: 32px; border-radius: 16px; background: #2a2b32; color: #fff; font-size: 24px; line-height: 32px; }
  .categories { justify-content: center; gap: 66px; padding: 29px 24px; background: #000; color: #d5d9dd; }

  .content { display: grid; grid-template-columns: 656px 1fr; gap: 32px; padding: 80px; }
  .card { display: flex; flex-direction: column; border-radius: 8px; box-shadow: 0 2px 10px rgba(0, 0, 0, .2), 0 4px 4px rgba(0, 0, 0, .14), 0 6px 2px -4px rgba(0, 0, 0, .12); }
  .card a { display: flex; align-items: center; height: 106px; padding: 0 32px; }
  .card span { padding-top: 4px; border-bottom: 4px solid transparent; line-height: 32px; }
  .card .selected { border-color: #e5e4e9; }
  h1 { margin: 34px 0 32px; font-size: 40px; line-height: 54px; font-weight: 700; }
  p { margin: 0; }

  .newsletter { display: flex; flex-direction: column; align-items: center; gap: 24px; padding: 160px 24px; background: #ffff55; }
  .signup { display: flex; align-items: center; gap: 24px; }
  .signup label { margin-right: 40px; padding-top: 10px; font-weight: 700; }
  .signup input { width: 640px; height: 112px; padding: 0 22px; border: 2px solid #c2c2c2; border-radius: 8px; background: #fff; }
  .signup button { width: 640px; height: 112px; border-radius: 6px; background: #3b4050; color: #fff; font-weight: 500; box-shadow: 0 2px 10px rgba(0, 0, 0, .2), 0 4px 4px rgba(0, 0, 0, .3); }
  .agree { display: flex; align-items: center; gap: 24px; }
  .agree a { color: #4a86c8; }
  .tickbox { width: 60px; height: 60px; padding: 15px; background: #fff; }
  .tickbox input { display: block; width: 30px; height: 30px; margin: 0; accent-color: #3873cd; }
  .dockshade { flex: 1; min-height: 92px; background: linear-gradient(transparent 30%, rgba(0, 0, 0, .13)); mask-image: linear-gradient(90deg, transparent 7%, #000 12%, #000 86%, transparent 93%); }

  .shelf { position: relative; display: flex; justify-content: center; padding: 2px 0 10px; background: #050703; overflow: hidden; }
  .grass { position: absolute; inset: 0; mask-image: linear-gradient(90deg, rgba(0, 0, 0, .35), rgba(0, 0, 0, .6) 50%, #000 92%); }
  .dock { position: relative; display: flex; align-items: center; gap: 20px; height: 104px; padding: 0 14px 8px; border: 2px solid rgba(130, 130, 120, .5); border-radius: 30px; background: linear-gradient(90deg, #1a1b16, #1e1f15 50%, #241e19 65%, #272818 80%, #302214); }
  .app { position: relative; width: 66px; height: 66px; flex: none; }
  .large :global(svg) { width: 80px; height: 80px; margin: -7px; }
  .running { position: absolute; left: 29px; bottom: -18px; width: 8px; height: 8px; border-radius: 50%; background: #9b9b94; }
  .badge { position: absolute; top: -10px; right: -8px; width: 32px; height: 32px; border-radius: 50%; background: #e9584c; color: #fff; font-size: 14px; line-height: 32px; text-align: center; }
  .divider { width: 2px; height: 76px; margin: 0 9px; background: #64645c; }
  .thumbs { display: flex; align-items: center; gap: 10px; }
  .thumb { position: relative; display: flex; align-items: center; width: 76px; height: 66px; }
  .thumb > :global(svg) { height: auto; }
  .owner { position: absolute; right: 1px; bottom: -4px; width: 26px; height: 26px; }
  .bin { width: 54px; height: 76px; flex: none; }
</style>
